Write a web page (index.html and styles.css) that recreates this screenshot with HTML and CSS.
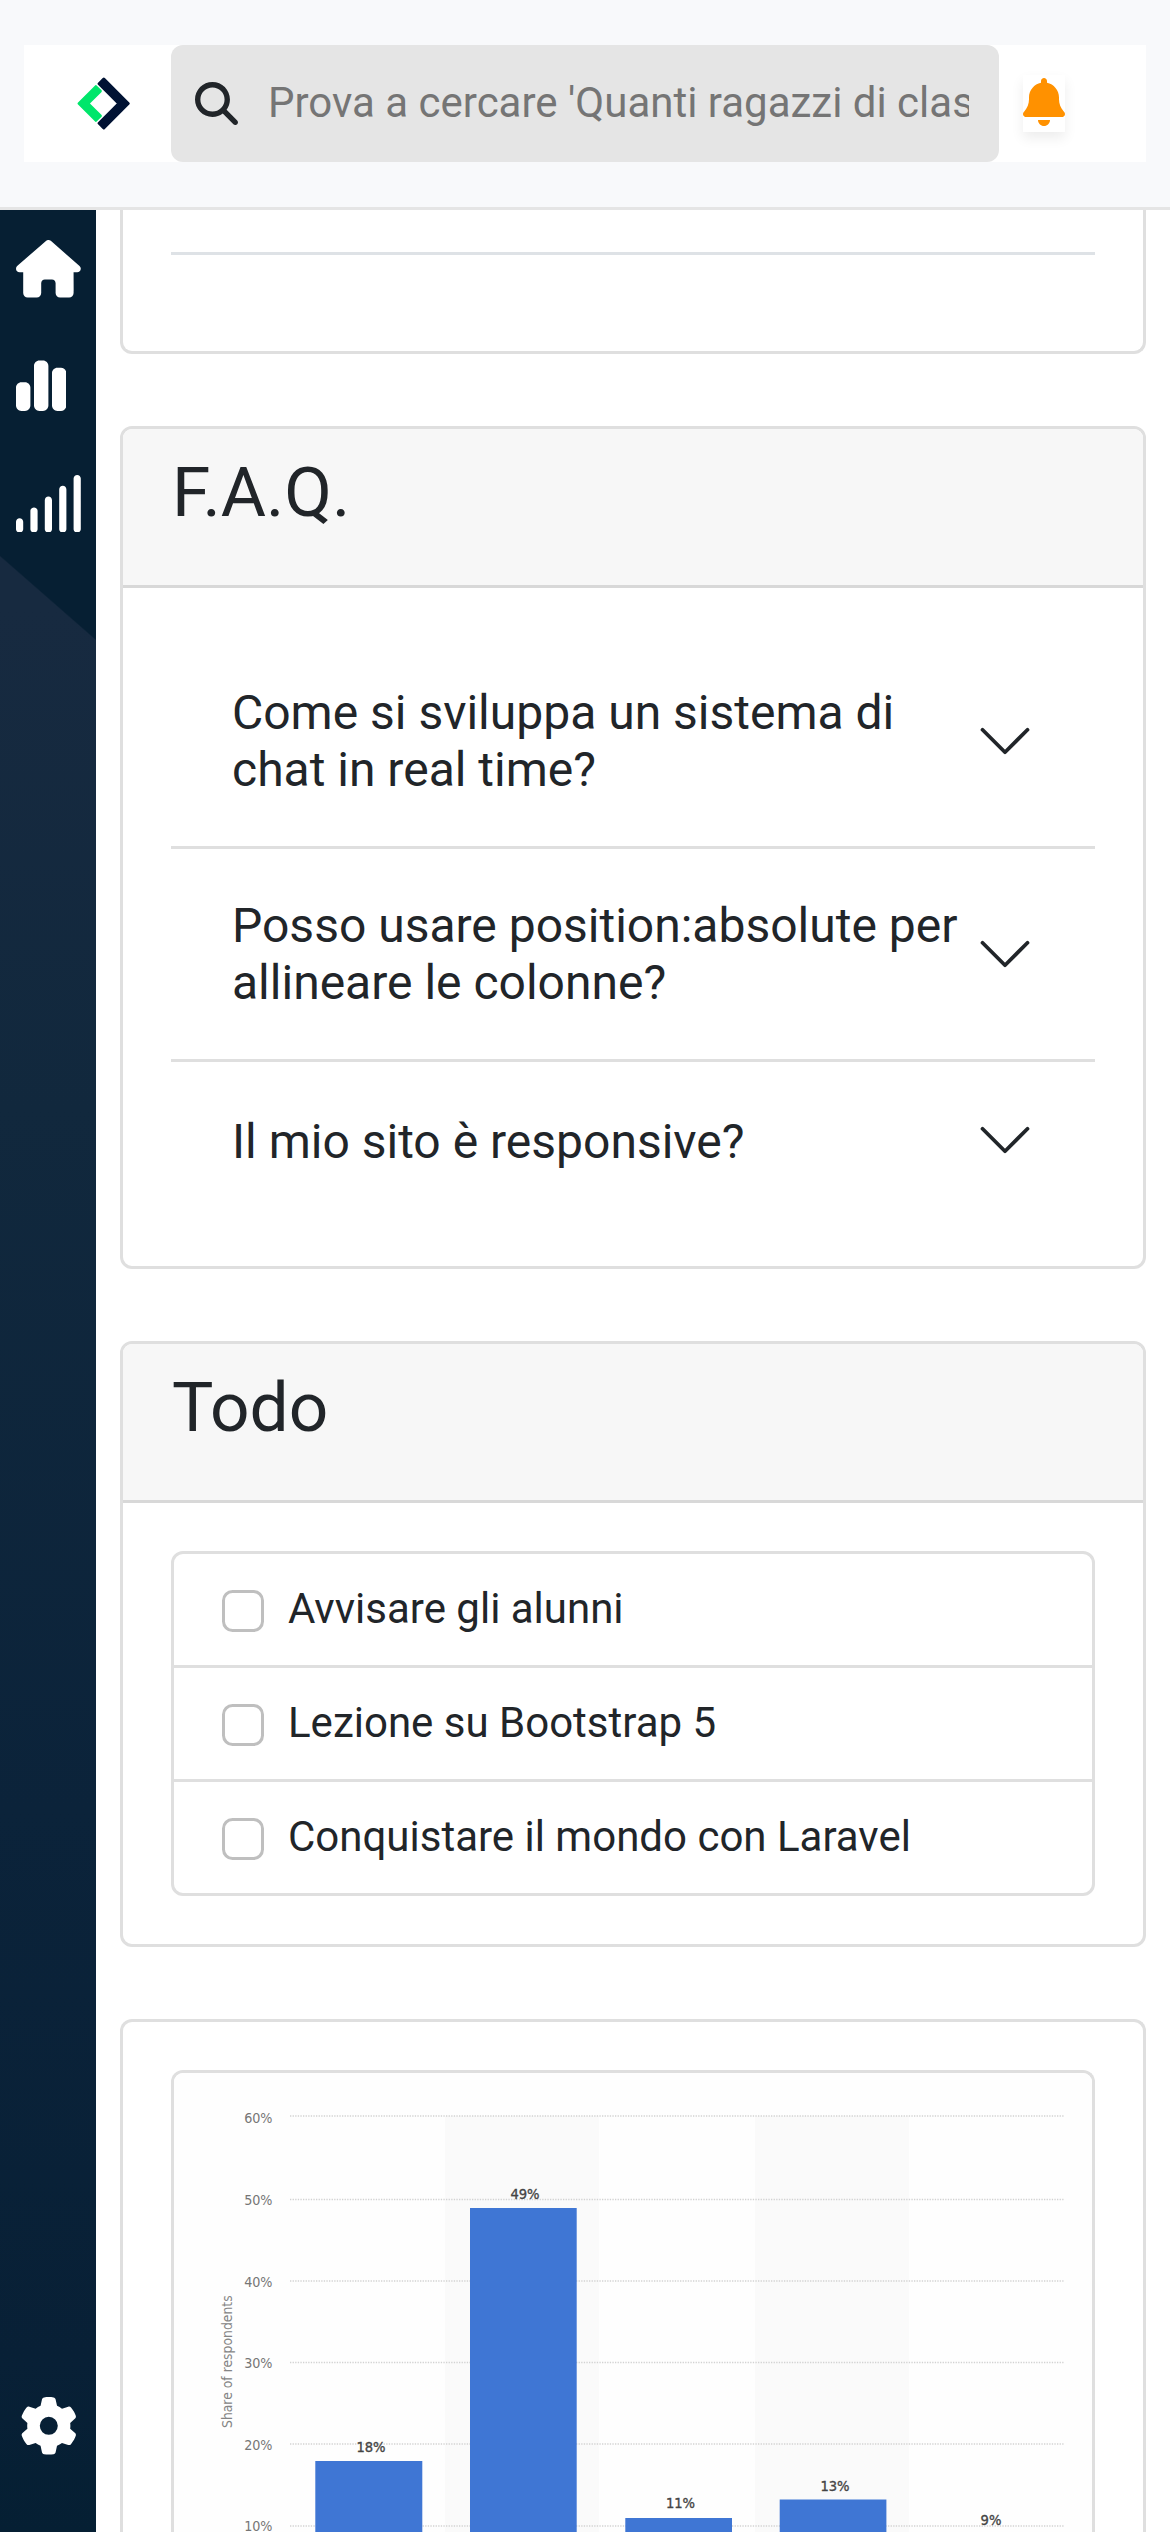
FILE: index.html
```html
<!DOCTYPE html>
<html lang="it">
<head>
<meta charset="utf-8">
<title>Dashboard</title>
<link rel="stylesheet" href="styles.css">
</head>
<body>
<header class="navbar">
  <div class="navbar-inner">
    <div class="brand">
      <svg class="logo" viewBox="0 0 54 54" stroke-width="3" stroke-linejoin="round">
        <path d="M2.1 26.5L18.9 9.7L23.3 14.1L10.9 26.5L23.3 38.9L18.9 43.3Z" fill="#00e66b" stroke="#00e66b"/>
        <path d="M26.8 2.1L51.2 26.5L26.8 50.9L22.1 46.2L41.8 26.5L22.1 6.8Z" fill="#001233" stroke="#001233"/>
      </svg>
    </div>
    <label class="search">
      <svg class="search-icon" viewBox="0 0 512 512"><path d="M416 208c0 45.9-14.9 88.3-40 122.7L502.6 457.4c12.5 12.5 12.5 32.8 0 45.3s-32.8 12.5-45.3 0L330.7 376c-34.4 25.2-76.8 40-122.7 40C93.1 416 0 322.9 0 208S93.1 0 208 0S416 93.1 416 208zM208 352a144 144 0 1 0 0-288 144 144 0 1 0 0 288z"/></svg>
      <input class="search-input" type="text" placeholder="Prova a cercare 'Quanti ragazzi di classe...'">
    </label>
    <div class="actions">
      <div class="bell-box">
        <svg class="bell" viewBox="0 0 448 512"><path d="M224 0c-17.7 0-32 14.3-32 32V51.2C119 66 64 130.6 64 208v18.8c0 47-17.3 92.4-48.5 127.6l-7.4 8.3c-8.4 9.4-10.4 22.9-5.3 34.4S19.4 416 32 416H416c12.6 0 24-7.4 29.2-18.9s3.1-25-5.3-34.4l-7.4-8.3C401.3 319.2 384 273.9 384 226.8V208c0-77.4-55-142-128-156.8V32c0-17.7-14.3-32-32-32zm45.3 493.3c12-12 18.7-28.3 18.7-45.3H224 160c0 17 6.7 33.3 18.7 45.3s28.3 18.7 45.3 18.7s33.3-6.7 45.3-18.7z"/></svg>
      </div>
    </div>
  </div>
</header>
<div class="layout">
  <nav class="sidebar">
    <div class="side-links">
      <svg class="side-icon w-house" viewBox="0 0 576 512"><path d="M575.8 255.5c0 18-15 32.1-32 32.1h-32l.7 160.2c0 2.7-.2 5.4-.5 8.1V472c0 22.1-17.9 40-40 40H456c-1.1 0-2.2 0-3.3-.1c-1.4 .1-2.8 .1-4.2 .1H416 392c-22.1 0-40-17.9-40-40V448 384c0-17.7-14.3-32-32-32H256c-17.7 0-32 14.3-32 32v64 24c0 22.1-17.9 40-40 40H160 128.1c-1.5 0-3-.1-4.5-.2c-1.2 .1-2.4 .2-3.6 .2H104c-22.1 0-40-17.9-40-40V360c0-.9 0-1.9 .1-2.8V287.6H32c-18 0-32-14-32-32.1c0-9 3-17 10-24L266.4 8c7-7 15-8 22-8s15 2 21 7L564.8 231.5c8 7 12 15 11 24z"/></svg>
      <svg class="side-icon w-chart" viewBox="0 0 448 512"><path d="M160 80c0-26.5 21.5-48 48-48h32c26.5 0 48 21.5 48 48V432c0 26.5-21.5 48-48 48H208c-26.5 0-48-21.5-48-48V80zM0 272c0-26.5 21.5-48 48-48H80c26.5 0 48 21.5 48 48V432c0 26.5-21.5 48-48 48H48c-26.5 0-48-21.5-48-48V272zM368 96h32c26.5 0 48 21.5 48 48V432c0 26.5-21.5 48-48 48H368c-26.5 0-48-21.5-48-48V144c0-26.5 21.5-48 48-48z"/></svg>
      <svg class="side-icon w-signal" viewBox="32 0 576 512"><path d="M576 0c17.7 0 32 14.3 32 32V480c0 17.7-14.3 32-32 32s-32-14.3-32-32V32c0-17.7 14.3-32 32-32zM448 96c17.7 0 32 14.3 32 32V480c0 17.7-14.3 32-32 32s-32-14.3-32-32V128c0-17.7 14.3-32 32-32zM352 224V480c0 17.7-14.3 32-32 32s-32-14.3-32-32V224c0-17.7 14.3-32 32-32s32 14.3 32 32zM192 288c17.7 0 32 14.3 32 32V480c0 17.7-14.3 32-32 32s-32-14.3-32-32V320c0-17.7 14.3-32 32-32zM96 416v64c0 17.7-14.3 32-32 32s-32-14.3-32-32V416c0-17.7 14.3-32 32-32s32 14.3 32 32z"/></svg>
    </div>
    <svg class="side-icon w-gear" viewBox="0 0 512 512"><path d="M495.9 166.6c3.2 8.7 .5 18.4-6.4 24.6l-43.3 39.4c1.1 8.3 1.7 16.8 1.7 25.4s-.6 17.1-1.7 25.4l43.3 39.4c6.9 6.2 9.6 15.9 6.4 24.6c-4.4 11.9-9.7 23.3-15.8 34.3l-4.7 8.1c-6.6 11-14 21.4-22.1 31.2c-5.9 7.2-15.7 9.6-24.5 6.8l-55.7-17.7c-13.4 10.3-28.2 18.9-44 25.4l-12.5 57.1c-2 9.1-9 16.3-18.2 17.8c-13.8 2.3-28 3.5-42.5 3.5s-28.7-1.2-42.5-3.5c-9.2-1.5-16.2-8.7-18.2-17.8l-12.5-57.1c-15.8-6.5-30.6-15.1-44-25.4L83.1 425.9c-8.8 2.8-18.6 .3-24.5-6.8c-8.1-9.8-15.5-20.2-22.1-31.2l-4.7-8.1c-6.1-11-11.4-22.4-15.8-34.3c-3.2-8.7-.5-18.4 6.4-24.6l43.3-39.4C64.6 273.1 64 264.6 64 256s.6-17.1 1.7-25.4L22.4 191.2c-6.9-6.2-9.6-15.9-6.4-24.6c4.4-11.9 9.7-23.3 15.8-34.3l4.7-8.1c6.6-11 14-21.4 22.1-31.2c5.9-7.2 15.7-9.6 24.5-6.8l55.7 17.7c13.4-10.3 28.2-18.9 44-25.4l12.5-57.1c2-9.1 9-16.3 18.2-17.8C227.3 1.2 241.5 0 256 0s28.7 1.2 42.5 3.5c9.2 1.5 16.2 8.7 18.2 17.8l12.5 57.1c15.8 6.5 30.6 15.1 44 25.4l55.7-17.7c8.8-2.8 18.6-.3 24.5 6.8c8.1 9.8 15.5 20.2 22.1 31.2l4.7 8.1c6.1 11 11.4 22.4 15.8 34.3zM256 336a80 80 0 1 0 0-160 80 80 0 1 0 0 160z"/></svg>
  </nav>
  <main class="content">
    <section class="card card-tail">
      <div class="tail-row"><div class="tail-text">g</div></div>
    </section>
    <section class="card">
      <h3 class="card-header">F.A.Q.</h3>
      <div class="card-body">
        <div class="faq-item"><h5 class="faq-title">Come si sviluppa un sistema di chat in real time?</h5><svg class="chevron" viewBox="0 0 16 16"><path d="M2 5l6 6 6-6"/></svg></div>
        <div class="faq-item"><h5 class="faq-title">Posso usare position:absolute per allineare le colonne?</h5><svg class="chevron" viewBox="0 0 16 16"><path d="M2 5l6 6 6-6"/></svg></div>
        <div class="faq-item"><h5 class="faq-title faq-title-single">Il mio sito è responsive?</h5><svg class="chevron" viewBox="0 0 16 16"><path d="M2 5l6 6 6-6"/></svg></div>
      </div>
    </section>
    <section class="card">
      <h3 class="card-header">Todo</h3>
      <div class="card-body">
        <ul class="todo">
          <li class="todo-item"><input class="check" type="checkbox"><span>Avvisare gli alunni</span></li>
          <li class="todo-item"><input class="check" type="checkbox"><span>Lezione su Bootstrap 5</span></li>
          <li class="todo-item"><input class="check" type="checkbox"><span>Conquistare il mondo con Laravel</span></li>
        </ul>
      </div>
    </section>
    <section class="card card-chart">
      <div class="card-body">
        <div class="chart-box">
          <svg class="chart" viewBox="174 2073 918 459">
            <rect width="918" height="459" x="174" y="2073" fill="#fefefe"/>
            <g fill="#fafafa"><rect x="445" y="2116" width="154" height="416"/><rect x="755" y="2116" width="154" height="416"/></g>
            <g class="grid"><path d="M290 2116H1064M290 2199.5H1064M290 2281H1064M290 2362.5H1064M290 2444H1064M290 2526H1064"/></g>
            <g fill="#3f76d4"><rect x="315.3" y="2461" width="107" height="71"/><rect x="470" y="2208" width="106.7" height="324"/><rect x="625.3" y="2518" width="106.7" height="14"/><rect x="779.7" y="2499.5" width="106.7" height="33"/></g>
            <g class="axis"><text x="272.5" y="2123">60%</text><text x="272.5" y="2204.5">50%</text><text x="272.5" y="2286.5">40%</text><text x="272.5" y="2368">30%</text><text x="272.5" y="2450">20%</text><text x="272.5" y="2531">10%</text></g>
            <g class="value"><text x="371" y="2452">18%</text><text x="525" y="2198.8">49%</text><text x="680.5" y="2507.5">11%</text><text x="835" y="2491">13%</text><text x="991" y="2524.5">9%</text></g>
            <text class="axis-title" transform="translate(232 2428) rotate(-90)">Share of respondents</text>
          </svg>
        </div>
      </div>
    </section>
  </main>
</div>
</body>
</html>
```

FILE: styles.css
```css
* { box-sizing: border-box; }
body {
  margin: 0;
  height: 2532px;
  overflow: hidden;
  display: flex;
  flex-direction: column;
  background: #fff;
  color: #212529;
  font-family: Roboto, sans-serif;
  font-size: 42px;
  line-height: 63px;
}
.navbar {
  flex: none;
  height: 210px;
  padding: 45px 24px;
  background: #f8f9fb;
  border-bottom: 3px solid #e5e5e5;
}
.navbar-inner { display: flex; height: 117px; background: #fff; }
.brand { width: 147px; padding: 32px 0 0 53px; }
.logo { display: block; width: 54px; height: 54px; }
.search {
  display: flex;
  align-items: center;
  gap: 30px;
  width: 828px;
  padding: 0 30px 0 24px;
  border-radius: 12px;
  background: #e5e5e5;
}
.search-icon { flex: none; width: 43px; height: 43px; fill: #212529; }
.search-input {
  flex: 1;
  min-width: 0;
  height: 69px;
  padding: 0 0 2px;
  border: 0;
  background: none;
  font: inherit;
}
.search-input::placeholder { color: #757575; opacity: 1; }
.actions { padding: 30px 0 0 24px; }
.bell-box {
  width: 42px;
  height: 57px;
  padding-top: 3px;
  background: #fff;
  box-shadow: 0 6px 12px rgba(0, 0, 0, .075);
}
.bell { display: block; width: 42px; height: 48px; fill: #ff9100; }

.layout { display: flex; height: 2322px; overflow: hidden; }
.sidebar {
  display: flex;
  flex: none;
  flex-direction: column;
  justify-content: space-between;
  width: 96px;
  padding: 30px 0 77px 16px;
  background:
    linear-gradient(#061f33, #061f33) 0 0 / 96px 346px no-repeat,
    linear-gradient(to bottom left, #061f33 49.5%, transparent 50.5%) 0 346px / 96px 84px no-repeat,
    linear-gradient(180deg, #172a40 400px, #11283d 900px, #0b233a 1600px, #082036 2150px, #051f33 2322px);
}
.side-links { display: flex; flex-direction: column; gap: 59.8px; }
.side-icon { display: block; height: 57.6px; fill: #fff; }
.w-house, .w-signal { width: 64.8px; }
.w-chart { width: 50.4px; }
.w-gear { width: 57.6px; margin-left: 4px; }

.content {
  display: flex;
  flex: 1;
  flex-direction: column;
  gap: 72px;
  padding: 0 24px;
}
.card { flex: none; border: 3px solid #dfdfdf; border-radius: 12px; background: #fff; overflow: hidden; }
.card-tail { height: 144px; padding: 0 48px; border-top: 0; border-radius: 0 0 12px 12px; }
.tail-row { display: flex; height: 45px; padding-left: 26px; border-bottom: 3px solid #dee2e6; }
.tail-text { margin-top: -33px; line-height: 20px; }
.card-header {
  height: 159px;
  margin: 0;
  padding: 22px 48px 0 49px;
  background: #f7f7f7;
  border-bottom: 3px solid #d8d8d8;
  font-size: 69.4px;
  font-weight: 400;
  line-height: 83px;
}
.card-body { padding: 48px; }
.card-chart { height: 513px; border-bottom: 0; border-radius: 12px 12px 0 0; }
.card-chart .card-body { padding-bottom: 0; }

.faq-item { display: flex; align-items: center; padding: 48px 60px 48px 61px; }
.faq-item + .faq-item { border-top: 3px solid #dfdfdf; }
.faq-title { flex: 1; margin: 0; font-size: 48px; font-weight: 400; line-height: 57px; }
.faq-title-single { padding-top: 2px; }
.chevron {
  flex: none;
  width: 60px;
  height: 60px;
  fill: none;
  stroke: #212529;
  stroke-linecap: round;
  stroke-linejoin: round;
}

.todo { margin: 0; padding: 0; list-style: none; border: 3px solid #dfdfdf; border-radius: 12px; }
.todo-item { display: flex; gap: 24px; height: 111px; padding: 24px 48px; line-height: 61px; }
.todo-item + .todo-item { height: 114px; border-top: 3px solid #dfdfdf; }
.check {
  appearance: none;
  width: 42px;
  height: 42px;
  margin: 12px 0 0;
  border: 3px solid #bfbfbf;
  border-radius: 10.5px;
  background: #fff;
}

.chart-box { border: 3px solid #dfdfdf; border-bottom: 0; border-radius: 12px 12px 0 0; overflow: hidden; }
.chart { display: block; width: 918px; height: 459px; font-family: "DejaVu Sans Condensed", "DejaVu Sans", sans-serif; }
.grid { fill: none; stroke: #d2d2d2; stroke-width: 1.4; stroke-dasharray: 1.3 1.3; }
.axis { fill: #767676; font-size: 14.2px; text-anchor: end; }
.value { fill: #454545; stroke: #454545; stroke-width: .35; font-size: 14.6px; text-anchor: middle; }
.axis-title { fill: #858585; font-size: 13.8px; }
```
